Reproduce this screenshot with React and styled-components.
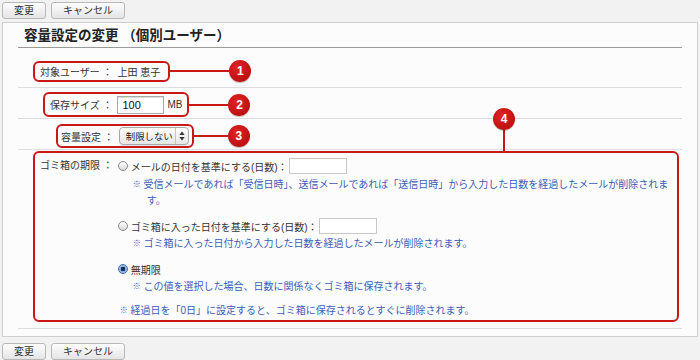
import React from "react";
import styled, { createGlobalStyle } from "styled-components";

const GlobalStyle = createGlobalStyle`
  body {
    margin: 0;
    background: #f2f2f2;
    font-family: "Liberation Sans", "Noto Sans CJK JP", sans-serif;
    font-size: 10px;
    color: #333;
  }
`;

const RED = "#c91818";

const Radio = ({ checked }) => <RadioDot checked={checked} />;

const SelectArrows = () => (
  <svg width="6" height="10" viewBox="0 0 6 10">
    <path d="M3 0.5 L5.6 4 L0.4 4 Z" fill="#333" />
    <path d="M3 9.5 L5.6 6 L0.4 6 Z" fill="#333" />
  </svg>
);

const Toolbar = ({ bottom }) => (
  <Bar bottom={bottom}>
    <Button>変更</Button>
    <Button>キャンセル</Button>
  </Bar>
);

const App = () => {
  return (
    <>
      <GlobalStyle />
      <Page>
        <Toolbar />
        <Panel>
          <Title>容量設定の変更 （個別ユーザー）</Title>

          <Row top={12} bottom={5}>
            <Highlight h={21} pl={5} pr={8}>
              <Label>対象ユーザー ：</Label>
              <span>上田 恵子</span>
            </Highlight>
            <Connector w={59} />
            <Badge>1</Badge>
          </Row>

          <Row top={4} bottom={1} indent={25}>
            <Highlight h={25} pl={5} pr={5}>
              <Label>保存サイズ ：</Label>
              <Value>
                <SizeInput>100</SizeInput>
                <span>MB</span>
              </Value>
            </Highlight>
            <Connector w={39} />
            <Badge>2</Badge>
          </Row>

          <Row top={5} bottom={1} indent={38}>
            <Highlight h={24} pl={3} pr={3}>
              <Label>容量設定 ：</Label>
              <Select>
                <SelectText>制限しない</SelectText>
                <SelectButton>
                  <SelectArrows />
                </SelectButton>
              </Select>
            </Highlight>
            <Connector w={34} />
            <Badge>3</Badge>
          </Row>

          <Row top={1} bottom={6}>
            <TrashBox>
              <Stem />
              <FloatBadge>4</FloatBadge>
              <Label>ゴミ箱の期限 ：</Label>
              <Options>
                <Group>
                  <OptionLine>
                    <Radio />
                    <span>メールの日付を基準にする(日数)：</span>
                    <DaysInput />
                  </OptionLine>
                  <Note mt={2}>
                    <Mark>※</Mark> 受信メールであれば「受信日時」、送信メールであれば「送信日時」から入力した日数を経過したメールが削除されます。
                  </Note>
                </Group>
                <Group>
                  <OptionLine>
                    <Radio />
                    <span>ゴミ箱に入った日付を基準にする(日数)：</span>
                    <DaysInput />
                  </OptionLine>
                  <Note mt={1}>
                    <Mark>※</Mark> ゴミ箱に入った日付から入力した日数を経過したメールが削除されます。
                  </Note>
                </Group>
                <Group>
                  <OptionLine>
                    <Radio checked />
                    <span>無期限</span>
                  </OptionLine>
                  <Note mt={1}>
                    <Mark>※</Mark> この値を選択した場合、日数に関係なくゴミ箱に保存されます。
                  </Note>
                </Group>
                <Note flush>
                  <Mark>※</Mark> 経過日を「0日」に設定すると、ゴミ箱に保存されるとすぐに削除されます。
                </Note>
              </Options>
            </TrashBox>
          </Row>
        </Panel>
        <Toolbar bottom />
      </Page>
    </>
  );
};
export default App;

const Page = styled.div`
  padding: 2px 2px 0;
`;

const Bar = styled.div`
  display: flex;
  gap: 5px;
  height: 17px;
  margin-top: ${(p) => (p.bottom ? "6px" : "0")};
`;

const Button = styled.button`
  height: 17px;
  padding: 0 11px;
  border: 1px solid #b8b8b8;
  border-radius: 3px;
  background: linear-gradient(#fefefe, #e4e4e4);
  font-family: "Liberation Sans", "Noto Sans CJK JP", sans-serif;
  font-size: 10px;
  line-height: 15px;
  color: #333;
`;

const Panel = styled.div`
  margin-top: 3px;
  border: 1px solid #cfcfcf;
  background: #fcfcfc;
  padding: 0 15px 7px;
`;

const Title = styled.h1`
  margin: 0;
  box-sizing: border-box;
  height: 25px;
  padding: 5px 0 0 6px;
  border-bottom: 1px solid #9a9a9a;
  font-size: 13.5px;
  line-height: 15px;
  font-weight: bold;
  color: #222;
`;

const Row = styled.div`
  display: flex;
  align-items: center;
  padding: ${(p) => p.top}px 0 ${(p) => p.bottom}px ${(p) => p.indent || 15}px;
  border-bottom: 1px solid #dedede;
`;

const Highlight = styled.div`
  display: inline-flex;
  align-items: center;
  gap: 5px;
  box-sizing: border-box;
  height: ${(p) => p.h}px;
  padding: 0 ${(p) => p.pr}px 0 ${(p) => p.pl}px;
  border: 2px solid ${RED};
  border-radius: 6px;
  white-space: nowrap;
`;

const Label = styled.span`
  white-space: nowrap;
  color: #333;
`;

const Value = styled.span`
  display: inline-flex;
  align-items: center;
  gap: 3px;
`;

const Connector = styled.div`
  width: ${(p) => p.w}px;
  height: 2px;
  background: ${RED};
`;

const Badge = styled.div`
  width: 22px;
  height: 22px;
  border-radius: 50%;
  background: radial-gradient(circle at 40% 35%, #e02424, #b00808);
  box-shadow: 0 1px 1px rgba(0, 0, 0, 0.25);
  color: #fff;
  font-size: 12px;
  font-weight: bold;
  line-height: 22px;
  text-align: center;
`;

const FloatBadge = styled(Badge)`
  position: absolute;
  left: 458px;
  top: -45px;
`;

const Stem = styled.div`
  position: absolute;
  left: 468px;
  top: -24px;
  width: 2px;
  height: 23px;
  background: ${RED};
`;

const SizeInput = styled.div`
  box-sizing: border-box;
  width: 47px;
  height: 18px;
  padding-left: 4px;
  border: 1px solid #aaa;
  box-shadow: inset 0 1px 1px rgba(0, 0, 0, 0.15);
  background: #fff;
  font-size: 11px;
  line-height: 16px;
  color: #111;
`;

const Select = styled.div`
  display: flex;
  align-items: center;
  box-sizing: border-box;
  width: 70px;
  height: 18px;
  border: 1px solid #a8a8a8;
  border-radius: 4px;
  background: linear-gradient(#ffffff, #e6e6e6);
  box-shadow: 0 1px 1px rgba(0, 0, 0, 0.1);
`;

const SelectText = styled.span`
  flex: 1;
  padding-left: 6px;
  font-size: 9.4px;
  color: #222;
`;

const SelectButton = styled.span`
  display: flex;
  align-items: center;
  justify-content: center;
  width: 12px;
  height: 100%;
  border-left: 1px solid #c4c4c4;
`;

const TrashBox = styled.div`
  position: relative;
  display: flex;
  align-items: flex-start;
  gap: 5px;
  box-sizing: border-box;
  width: 646px;
  padding: 4px 0 1px 5px;
  border: 2px solid ${RED};
  border-radius: 6px;

  & > ${Label} {
    line-height: 18px;
  }
`;

const Options = styled.div`
  flex: 1;
  display: flex;
  flex-direction: column;
  gap: 8px;
`;

const Group = styled.div`
  display: flex;
  flex-direction: column;
`;

const OptionLine = styled.div`
  display: flex;
  align-items: center;
  height: 18px;
  white-space: nowrap;
`;

const RadioDot = styled.span`
  box-sizing: border-box;
  width: 10px;
  height: 10px;
  margin-right: 3px;
  border-radius: 50%;
  border: 1px solid ${(p) => (p.checked ? "#3d6cb0" : "#8a8a8a")};
  background: ${(p) =>
    p.checked
      ? "radial-gradient(circle, #1b2b4f 0 2px, #7fa9dd 2.5px, #cfe0f5 100%)"
      : "linear-gradient(#ffffff, #d8d8d8)"};
`;

const DaysInput = styled.span`
  box-sizing: border-box;
  width: 58px;
  height: 16px;
  margin-left: 1px;
  border: 1px solid #c8c8c8;
  background: #fff;
`;

const Note = styled.div`
  margin-top: ${(p) => p.mt || 0}px;
  padding-left: ${(p) => (p.flush ? 2 : 29)}px;
  text-indent: ${(p) => (p.flush ? 0 : -14)}px;
  line-height: 16px;
  color: #3b5cb8;
`;

const Mark = styled.span`
  font-size: 8px;
  font-weight: bold;
  line-height: 1;
  vertical-align: 1px;
  color: #3b5cb8;
`;
